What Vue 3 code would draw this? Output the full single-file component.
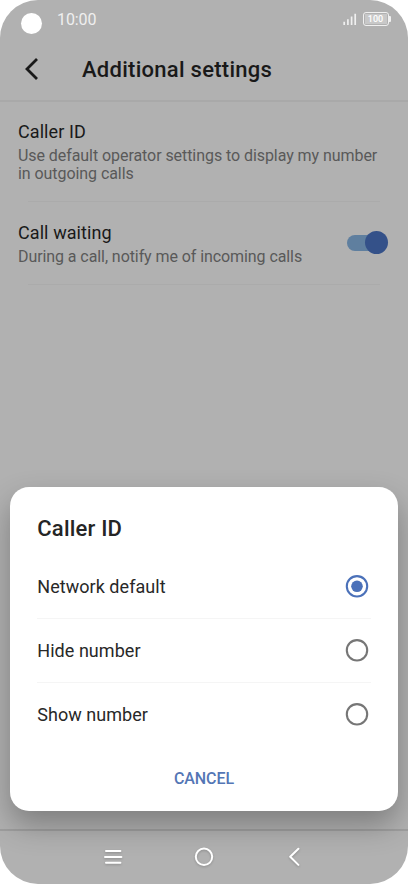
<script setup>
import { ref } from 'vue'

const options = ['Network default', 'Hide number', 'Show number']
const selected = ref('Network default')
const waiting = ref(true)
</script>

<template>
  <div class="phone">
    <header class="status">
      <i class="camera"></i>
      <span class="clock">10:00</span>
      <svg class="signal" width="14" height="13" viewBox="0 0 14 13">
        <path d="M1.2 8.7V12M4.9 6.3V12M8.6 3.5V12M12.2 .8V12" fill="none" stroke="#f0f0f0" stroke-width="1.7" />
      </svg>
      <div class="battery"><span>100</span></div>
    </header>

    <div class="appbar">
      <svg class="back" width="16" height="24" viewBox="0 0 16 24">
        <path d="M14 1.9L4 11.9L14 21.9" fill="none" stroke="#191919" stroke-width="2.8" />
      </svg>
      <h1>Additional settings</h1>
    </div>

    <main>
      <section class="setting first">
        <div>
          <h2>Caller ID</h2>
          <p>Use default operator settings to display my number<br />in outgoing calls</p>
        </div>
      </section>
      <section class="setting second">
        <div>
          <h2>Call waiting</h2>
          <p>During a call, notify me of incoming calls</p>
        </div>
        <button class="switch" :class="{ on: waiting }" aria-label="Call waiting" @click="waiting = !waiting"><i></i></button>
      </section>
    </main>

    <nav>
      <svg width="20" height="20" viewBox="0 0 20 20"><path d="M3 4H17.4M2 10H18.4M3 15.7H17.4" /></svg>
      <svg width="20" height="20" viewBox="0 0 20 20"><circle cx="10" cy="9.8" r="8.2" /></svg>
      <svg width="20" height="20" viewBox="0 0 20 20"><path d="M13.4 1.7L5.2 9.8L13.4 17.9" /></svg>
    </nav>

    <div class="dialog">
      <h3>Caller ID</h3>
      <ul>
        <li v-for="o in options" :key="o" @click="selected = o">
          <span>{{ o }}</span>
          <svg class="radio" :class="{ on: selected === o }" width="24" height="24" viewBox="0 0 24 24">
            <circle class="ring" cx="12" cy="12.3" r="10.2" />
            <circle v-if="selected === o" class="dot" cx="12" cy="12.3" r="5.8" />
          </svg>
        </li>
      </ul>
      <button class="cancel">CANCEL</button>
    </div>
  </div>
</template>

<style>
body {
  background: #fff;
}
</style>

<style scoped>
* {
  box-sizing: border-box;
}
.phone {
  position: relative;
  display: flex;
  flex-direction: column;
  width: 408px;
  height: 884px;
  overflow: hidden;
  border-radius: 38px;
  background: #b1b1b1;
  color: #191919;
  font-family: Roboto, sans-serif;
}
h1,
h2,
h3,
p,
ul {
  margin: 0;
  padding: 0;
}
button {
  border: 0;
  padding: 0;
  background: none;
  font-family: inherit;
}
.status {
  display: flex;
  align-items: flex-start;
  height: 39px;
  padding: 0 17px 0 21px;
}
.camera {
  width: 21px;
  height: 21px;
  margin-top: 13px;
  border-radius: 50%;
  background: #fff;
}
.clock {
  margin: 10px 0 0 15px;
  color: #efefef;
  font-size: 16px;
  line-height: 19px;
  letter-spacing: -0.1px;
}
.signal {
  margin: 13px 6px 0 auto;
}
.battery {
  position: relative;
  width: 26px;
  height: 14px;
  margin: 12px 2.5px 0 0;
  padding: 1px;
  border: 1.5px solid #f0f0f0;
  border-radius: 3px;
}
.battery::after {
  content: '';
  position: absolute;
  top: 3px;
  right: -3px;
  width: 2px;
  height: 6px;
  border-radius: 0 1px 1px 0;
  background: #f0f0f0;
}
.battery span {
  display: block;
  height: 10px;
  background: #c8c8c8;
  color: #fff;
  font-size: 9px;
  font-weight: 500;
  line-height: 10px;
  text-align: center;
}
.appbar {
  display: flex;
  align-items: center;
  height: 63px;
  padding: 0 0 1px 23px;
  border-bottom: 2px solid #a9a9a9;
}
.back {
  margin-right: 43px;
}
h1 {
  padding-top: 2px;
  font-size: 22px;
  font-weight: 500;
  line-height: 28px;
  letter-spacing: 0.27px;
}
main {
  flex: 1;
}
.setting {
  position: relative;
  display: flex;
  justify-content: space-between;
  padding: 0 21px 0 18px;
}
.first {
  height: 100px;
  padding-top: 18px;
}
.second {
  height: 83px;
  padding-top: 19px;
}
.setting::after {
  content: '';
  position: absolute;
  right: 28px;
  bottom: 0;
  left: 28px;
  height: 1px;
  background: #ababab;
}
h2 {
  margin-bottom: 3.5px;
  font-size: 18px;
  font-weight: 400;
  line-height: 23px;
  letter-spacing: 0.08px;
}
p {
  color: #595959;
  font-size: 16px;
  line-height: 18.5px;
  letter-spacing: -0.065px;
  white-space: nowrap;
}
.second p {
  letter-spacing: -0.08px;
}
.switch {
  position: relative;
  width: 41px;
  height: 23px;
  margin-top: 10px;
}
.switch::before {
  content: '';
  position: absolute;
  top: 4px;
  left: 1px;
  width: 35px;
  height: 16px;
  border-radius: 8px;
  background: #888;
}
.switch i {
  position: absolute;
  top: 0;
  left: 0;
  width: 23px;
  height: 23px;
  border-radius: 50%;
  background: #ddd;
}
.switch.on::before {
  background: #5f7f9f;
}
.switch.on i {
  left: 18.5px;
  background: #345189;
}
nav {
  display: flex;
  align-items: center;
  justify-content: space-between;
  height: 55px;
  padding: 0 103px 2px;
  border-top: 2px solid #9e9e9e;
}
nav svg {
  position: relative;
  z-index: 2;
  fill: none;
  stroke: #fff;
  stroke-width: 2;
  stroke-linecap: round;
  stroke-linejoin: round;
  filter: drop-shadow(0 1px 1px rgba(0, 0, 0, 0.2));
}
.dialog {
  position: absolute;
  bottom: 72.6px;
  left: 10.3px;
  display: flex;
  flex-direction: column;
  width: 387.4px;
  height: 324.7px;
  padding: 27.3px 27px 0;
  border-radius: 19px;
  background: #fff;
  box-shadow: 0 14px 30px rgba(0, 0, 0, 0.29);
}
h3 {
  color: #252525;
  font-size: 22px;
  font-weight: 500;
  line-height: 29px;
  letter-spacing: 0.2px;
}
ul {
  margin-top: 12px;
  list-style: none;
}
li {
  display: flex;
  align-items: center;
  justify-content: space-between;
  height: 64px;
  padding-right: 1.7px;
  border-bottom: 1px solid #f5f5f5;
  color: #282828;
  font-size: 18px;
  letter-spacing: 0.04px;
}
li:last-child {
  border-bottom-color: transparent;
}
.radio {
  margin-top: -1px;
  fill: none;
  stroke: #767676;
  stroke-width: 2.1;
}
.radio.on {
  stroke: #4b71b9;
}
.dot {
  fill: #4b71b9;
  stroke: none;
}
.cancel {
  align-self: center;
  margin-top: 22px;
  color: #5476b5;
  font-size: 16px;
  font-weight: 500;
  line-height: 20px;
  letter-spacing: -0.1px;
}
</style>
